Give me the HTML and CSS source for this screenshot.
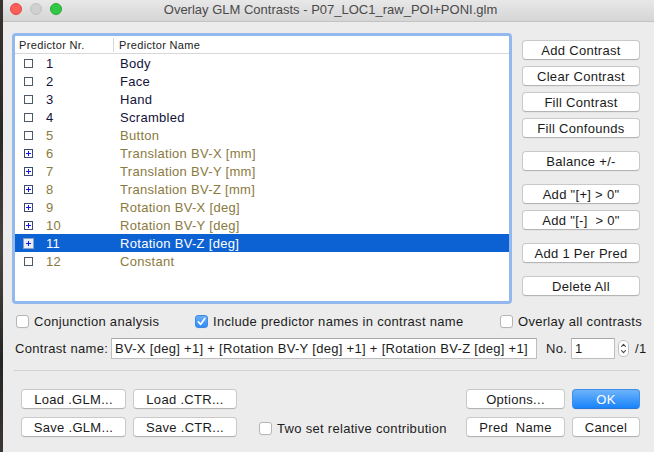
FILE: index.html
```html
<!DOCTYPE html>
<html>
<head>
<meta charset="utf-8">
<link rel="stylesheet" href="styles.css">
</head>
<body>
<div class="screen">
  <div class="desk"></div>
  <div class="window">
    <div class="titlebar">
      <div class="lights"><span class="light red"></span><span class="light gray"></span><span class="light green"></span></div>
      <div class="title">Overlay GLM Contrasts - P07_LOC1_raw_POI+PONI.glm</div>
      <div></div>
    </div>

    <div class="main">
      <div class="listbox">
        <div class="list-head">
          <div class="col-nr">Predictor Nr.</div>
          <div class="col-name">Predictor Name</div>
        </div>
        <div class="row dark"><span class="box"></span><span class="nr">1</span><span class="name">Body</span></div>
        <div class="row dark"><span class="box"></span><span class="nr">2</span><span class="name">Face</span></div>
        <div class="row dark"><span class="box"></span><span class="nr">3</span><span class="name">Hand</span></div>
        <div class="row dark"><span class="box"></span><span class="nr">4</span><span class="name">Scrambled</span></div>
        <div class="row olive"><span class="box"></span><span class="nr">5</span><span class="name">Button</span></div>
        <div class="row olive"><span class="box plus"></span><span class="nr">6</span><span class="name">Translation BV-X [mm]</span></div>
        <div class="row olive"><span class="box plus"></span><span class="nr">7</span><span class="name">Translation BV-Y [mm]</span></div>
        <div class="row olive"><span class="box plus"></span><span class="nr">8</span><span class="name">Translation BV-Z [mm]</span></div>
        <div class="row olive"><span class="box plus"></span><span class="nr">9</span><span class="name">Rotation BV-X [deg]</span></div>
        <div class="row olive"><span class="box plus"></span><span class="nr">10</span><span class="name">Rotation BV-Y [deg]</span></div>
        <div class="row selected"><span class="box plus sel"></span><span class="nr">11</span><span class="name">Rotation BV-Z [deg]</span></div>
        <div class="row olive"><span class="box"></span><span class="nr">12</span><span class="name">Constant</span></div>
      </div>

      <div class="buttons">
        <div class="group">
          <div class="btn">Add Contrast</div>
          <div class="btn">Clear Contrast</div>
          <div class="btn">Fill Contrast</div>
          <div class="btn">Fill Confounds</div>
        </div>
        <div class="group">
          <div class="btn">Balance +/-</div>
        </div>
        <div class="group">
          <div class="btn">Add "[+] &gt; 0"</div>
          <div class="btn">Add "[-]&nbsp; &gt; 0"</div>
        </div>
        <div class="group">
          <div class="btn">Add 1 Per Pred</div>
        </div>
        <div class="group">
          <div class="btn">Delete All</div>
        </div>
      </div>
    </div>

    <div class="opts">
      <div class="opt opt1"><span class="chk"></span>Conjunction analysis</div>
      <div class="opt opt2"><span class="chk checked"><svg viewBox="0 0 13 13" width="13" height="13"><path d="M3.3 6.8 L5.6 9.4 L9.8 3.4" fill="none" stroke="#fff" stroke-width="1.7" stroke-linecap="round" stroke-linejoin="round"/></svg></span>Include predictor names in contrast name</div>
      <div class="opt"><span class="chk"></span>Overlay all contrasts</div>
    </div>

    <div class="cname">
      <div class="cname-label">Contrast name:</div>
      <div class="field wide"><span class="field-text">BV-X [deg] +1] + [Rotation BV-Y [deg] +1] + [Rotation BV-Z [deg] +1]</span></div>
      <div class="no-label">No.</div>
      <div class="field num">1</div>
      <div class="stepper">
        <svg viewBox="0 0 11 17" width="11" height="17"><path d="M3.5 6.5 L5.5 4.3 L7.5 6.5 M3.5 10.5 L5.5 12.7 L7.5 10.5" fill="none" stroke="#444" stroke-width="1.1" stroke-linecap="round" stroke-linejoin="round"/></svg>
      </div>
      <div class="of">/1</div>
    </div>

    <div class="sep"></div>

    <div class="bottom">
      <div class="grid-left">
        <div class="btn">Load .GLM...</div>
        <div class="btn">Load .CTR...</div>
        <div class="btn">Save .GLM...</div>
        <div class="btn">Save .CTR...</div>
      </div>
      <div class="opt twoset"><span class="chk"></span>Two set relative contribution</div>
      <div class="grid-right">
        <div class="btn">Options...</div>
        <div class="btn primary">OK</div>
        <div class="btn">Pred&nbsp; Name</div>
        <div class="btn">Cancel</div>
      </div>
    </div>
  </div>
</div>
</body>
</html>
```

FILE: styles.css
```css
* { box-sizing: border-box; }
html, body { margin: 0; padding: 0; }
body {
  width: 654px;
  height: 452px;
  overflow: hidden;
  font-family: "Liberation Sans", Arial, sans-serif;
  font-size: 13px;
  letter-spacing: 0.3px;
  color: #1c1c1c;
}
.screen {
  display: flex;
  width: 654px;
  height: 452px;
}
.desk {
  width: 3px;
  background: linear-gradient(#3a3430, #2a2826 30%, #4a4442 55%, #262422 80%, #3c3634);
}
.window {
  flex: 1;
  background: #ececec;
  display: flex;
  flex-direction: column;
}

/* title bar */
.titlebar {
  height: 22px;
  display: grid;
  grid-template-columns: 1fr auto 1fr;
  align-items: center;
  background: linear-gradient(#e9e8e9, #d6d5d6);
  border-bottom: 1px solid #c4c3c4;
}
.lights {
  display: flex;
  gap: 8px;
  padding-left: 7px;
  margin-top: -3px;
}
.light {
  width: 12px;
  height: 12px;
  border-radius: 50%;
}
.light.red { background: #fc5f57; border: 1px solid #e1463f; }
.light.gray { background: #d1d0d1; border: 1px solid #c2c1c2; }
.light.green { background: #33c748; border: 1px solid #27aa35; }
.title {
  font-size: 13px;
  letter-spacing: 0;
  color: #4a4a4a;
  margin-top: -3px;
  margin-left: 4px;
}

/* main */
.main {
  display: flex;
  margin-top: 11px;
  padding-left: 9px;
  gap: 10px;
}
.listbox {
  width: 500px;
  height: 271px;
  border: 3px solid #92b8ee;
  border-radius: 4px;
  background: #fff;
}
.list-head {
  display: flex;
  height: 18px;
  border-bottom: 1px solid #d8d8d8;
  font-size: 11px;
  letter-spacing: 0.35px;
  color: #222;
  align-items: center;
}
.col-nr {
  width: 99px;
  padding-left: 4px;
  border-right: 1px solid #d8d8d8;
  height: 14px;
  line-height: 14px;
}
.col-name {
  padding-left: 5px;
  line-height: 14px;
}
.row {
  display: flex;
  align-items: center;
  height: 18px;
  padding-left: 9px;
  font-size: 13px;
}
.row.dark { color: #12123a; }
.row.olive { color: #8a7a3e; }
.row.selected { background: #0d62d3; color: #fff; }
.box {
  width: 9px;
  height: 9px;
  border: 1px solid #4e5a68;
  margin-right: 13px;
  position: relative;
  flex: none;
}
.box.plus { border-color: #3c4a70; }
.box.plus::before,
.box.plus::after {
  content: "";
  position: absolute;
  background: #1414e6;
}
.box.plus::before { left: 1px; right: 1px; top: 3px; height: 1px; }
.box.plus::after { top: 1px; bottom: 1px; left: 3px; width: 1px; }
.box.sel {
  width: 11px;
  height: 11px;
  margin-left: -1px;
  margin-right: 12px;
  background: #e6ecf8;
  border-color: #8ca0c8;
}
.box.sel::before { left: 2px; right: 2px; top: 4px; }
.box.sel::after { top: 2px; bottom: 2px; left: 4px; }
.nr { width: 74px; }

/* buttons */
.buttons {
  width: 118px;
  padding-top: 7px;
  display: flex;
  flex-direction: column;
  gap: 13px;
}
.group {
  display: flex;
  flex-direction: column;
  gap: 6px;
}
.btn {
  height: 20px;
  background: #fff;
  border: 1px solid #c9c9c9;
  border-bottom-color: #b4b4b4;
  border-radius: 4px;
  box-shadow: 0 0.5px 0 rgba(0,0,0,0.06);
  display: flex;
  align-items: center;
  justify-content: center;
  font-size: 13px;
  color: #1a1a1a;
  white-space: nowrap;
}
.btn.primary {
  background: linear-gradient(#6cb3fa, #1a83fb);
  border-color: #3f8fe8;
  border-bottom-color: #2a75d8;
  color: #fff;
}

/* options */
.opts {
  display: flex;
  align-items: center;
  height: 19px;
  margin-top: 8px;
  padding-left: 13px;
}
.opt {
  display: flex;
  align-items: center;
  white-space: nowrap;
}
.opt1 { width: 179px; }
.opt2 { width: 305px; }
.chk {
  width: 13px;
  height: 13px;
  border: 1px solid #b5b5b5;
  border-radius: 3px;
  background: #fff;
  margin-right: 5px;
  flex: none;
  box-shadow: 0 0.5px 0 rgba(0,0,0,0.05);
}
.chk.checked {
  background: linear-gradient(#68aefa, #2f8cf8);
  border-color: #3d8ae6;
}
.chk svg { display: block; margin: -1px; }

/* contrast name */
.cname {
  display: flex;
  align-items: center;
  height: 21px;
  margin-top: 7px;
  padding-left: 12px;
}
.cname-label { width: 96px; }
.field {
  height: 21px;
  background: #fff;
  border: 1px solid #bdbdbd;
  border-top-color: #a8a8a8;
  display: flex;
  align-items: center;
  padding: 0 3px;
  overflow: hidden;
  white-space: nowrap;
}
.field.wide { width: 426px; }
.field.num { width: 44px; }
.no-label { margin-left: 9px; width: 25px; }
.stepper {
  width: 11px;
  height: 17px;
  margin-left: 3px;
  background: #fff;
  border: 1px solid #c2c2c2;
  border-radius: 5px;
  display: flex;
  overflow: hidden;
}
.stepper svg { display: block; margin: -1px; }
.of { margin-left: 6px; }

.sep {
  margin-top: 11px;
  margin-left: 11px;
  width: 626px;
  height: 1px;
  background: #d2d2d2;
}

/* bottom */
.bottom {
  display: flex;
  align-items: flex-end;
  margin-top: 18px;
  padding-left: 18px;
  padding-right: 14px;
}
.grid-left {
  display: grid;
  grid-template-columns: 105px 104px;
  grid-auto-rows: 20px;
  column-gap: 7px;
  row-gap: 8px;
}
.grid-right {
  display: grid;
  grid-template-columns: 99px 68px;
  grid-auto-rows: 20px;
  column-gap: 7px;
  row-gap: 8px;
  margin-left: auto;
}
.twoset {
  margin-left: 22px;
  margin-bottom: 1px;
}
```
